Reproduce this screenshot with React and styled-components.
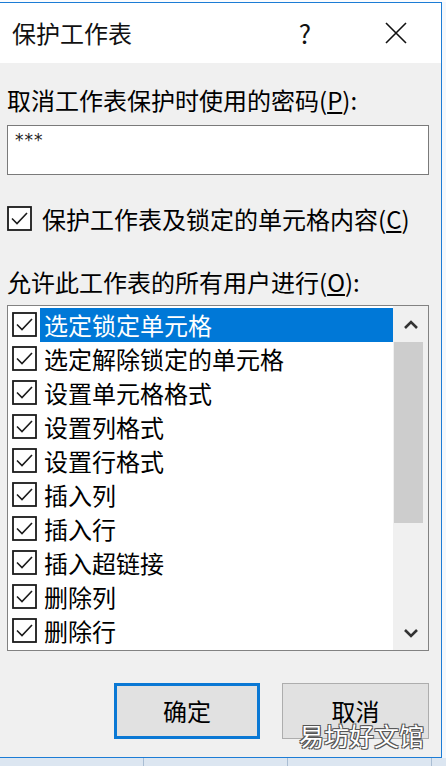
import styled, { createGlobalStyle } from 'styled-components';

const GlobalStyle = createGlobalStyle`
    html, body {
        margin: 0;
        padding: 0;
        background: #f4f7fb;
    }
    body {
        font-family: "Noto Sans CJK SC", "Microsoft YaHei", "Noto Sans", sans-serif;
        color: #000;
        overflow: hidden;
    }
`;

const PERMISSIONS = [
    '选定锁定单元格',
    '选定解除锁定的单元格',
    '设置单元格格式',
    '设置列格式',
    '设置行格式',
    '插入列',
    '插入行',
    '插入超链接',
    '删除列',
    '删除行',
];

const Page = styled.div`
    display: flex;
    flex-direction: column;
    width: 446px;
    height: 766px;
`;

const SheetStrip = styled.div`
    display: flex;
    height: ${({ $height }) => $height}px;
    background: ${({ $bg }) => $bg};
`;

const SheetCell = styled.div`
    width: 144px;
    border-right: 1px solid #a9bdd3;
    box-sizing: border-box;
`;

const Dialog = styled.div`
    position: relative;
    width: 442px;
    box-sizing: border-box;
    border: 1px solid #1c7cd5;
    border-left: none;
    background: #f0f0f0;
    display: flex;
    flex-direction: column;
`;

const TitleBar = styled.div`
    display: flex;
    align-items: center;
    height: 60px;
    padding: 0 20px 0 12px;
    background: #fff;
`;

const Title = styled.div`
    flex: 1;
    font-size: 24px;
    line-height: 30px;
    color: #111;
`;

const HelpButton = styled.div`
    width: 40px;
    margin-right: 46px;
    text-align: center;
    font-size: 26px;
    line-height: 30px;
    color: #111;
`;

const CloseButton = styled.div`
    display: flex;
    justify-content: center;
    align-items: center;
    width: 50px;
    height: 40px;
`;

const Body = styled.div`
    display: flex;
    flex-direction: column;
    padding: 22px 12px 18px 7px;
`;

const Label = styled.div`
    font-size: 24px;
    line-height: 30px;
    margin-top: ${({ $top }) => $top || 0}px;
`;

const PasswordBox = styled.div`
    margin-top: 10px;
    height: 50px;
    box-sizing: border-box;
    border: 1px solid #7a7a7a;
    background: #fff;
    padding: 4px 0 0 7px;
    font-family: "DejaVu Sans", sans-serif;
    font-size: 17px;
    line-height: 20px;
    letter-spacing: 1px;
    color: #222;
`;

const CheckRow = styled.label`
    display: flex;
    align-items: center;
    gap: 10px;
    margin-top: 29px;
    height: 30px;
`;

const CheckText = styled.span`
    font-size: 24px;
    line-height: 30px;
    white-space: nowrap;
`;

const ListBox = styled.div`
    display: flex;
    margin-top: 8px;
    height: 346px;
    box-sizing: border-box;
    border: 1px solid #828282;
    background: #fff;
`;

const Items = styled.div`
    flex: 1;
    padding: 2px 0 0 4px;
`;

const Item = styled.div`
    display: flex;
    align-items: center;
    height: 34px;
    gap: 3px;
`;

const ItemText = styled.div`
    flex: 1;
    height: 34px;
    padding-left: 4px;
    font-size: 24px;
    line-height: 34px;
    color: ${({ $selected }) => ($selected ? '#fff' : '#000')};
    background: ${({ $selected }) => ($selected ? '#0078d7' : 'transparent')};
`;

const ScrollBar = styled.div`
    display: flex;
    flex-direction: column;
    width: 35px;
    padding-top: 2px;
    background: #f0f0f0;
`;

const ScrollArrow = styled.div`
    display: flex;
    justify-content: center;
    align-items: center;
    height: 34px;
`;

const Thumb = styled.div`
    height: 181px;
    width: 29px;
    margin-left: 1px;
    background: #cdcdcd;
`;

const Track = styled.div`
    flex: 1;
`;

const Buttons = styled.div`
    display: flex;
    justify-content: flex-end;
    gap: 22px;
    margin-top: 32px;
`;

const Button = styled.div`
    display: flex;
    justify-content: center;
    align-items: center;
    width: ${({ $width }) => $width}px;
    height: 56px;
    box-sizing: border-box;
    background: #e1e1e1;
    border: ${({ $primary }) => ($primary ? '3px solid #0a78d4' : '1px solid #adadad')};
    font-size: 24px;
    color: #000;
`;

const Watermark = styled.div`
    position: absolute;
    left: 299px;
    top: 717px;
    font-size: 25px;
    line-height: 30px;
    color: #fff;
    text-shadow:
        -1px -1px 0 #555,
        1px -1px 0 #555,
        -1px 1px 0 #555,
        1px 1px 0 #555;
`;

const CheckBox = () => (
    <svg width="25" height="25" viewBox="0 0 25 25">
        <rect x="1" y="1" width="23" height="23" fill="#fff" stroke="#1a1a1a" strokeWidth="1.8" />
        <path d="M5 12.5 L10 17.5 L20 7" fill="none" stroke="#1a1a1a" strokeWidth="1.6" />
    </svg>
);

const Chevron = ({ down }) => (
    <svg width="16" height="10" viewBox="0 0 16 10">
        <path
            d={down ? 'M2 2 L8 8 L14 2' : 'M2 8 L8 2 L14 8'}
            fill="none"
            stroke="#333"
            strokeWidth="2.6"
        />
    </svg>
);

const ProtectSheetDialog = () => (
    <Dialog>
        <TitleBar>
            <Title>保护工作表</Title>
            <HelpButton>?</HelpButton>
            <CloseButton>
                <svg width="22" height="22" viewBox="0 0 22 22">
                    <path d="M1 1 L21 21 M21 1 L1 21" stroke="#111" strokeWidth="1.6" />
                </svg>
            </CloseButton>
        </TitleBar>
        <Body>
            <Label>取消工作表保护时使用的密码(<u>P</u>):</Label>
            <PasswordBox>***</PasswordBox>
            <CheckRow>
                <CheckBox />
                <CheckText>保护工作表及锁定的单元格内容(<u>C</u>)</CheckText>
            </CheckRow>
            <Label $top={33}>允许此工作表的所有用户进行(<u>O</u>):</Label>
            <ListBox>
                <Items>
                    {PERMISSIONS.map((name, i) => (
                        <Item key={name}>
                            <CheckBox />
                            <ItemText $selected={i === 0}>{name}</ItemText>
                        </Item>
                    ))}
                </Items>
                <ScrollBar>
                    <ScrollArrow>
                        <Chevron />
                    </ScrollArrow>
                    <Thumb />
                    <Track />
                    <ScrollArrow>
                        <Chevron down />
                    </ScrollArrow>
                </ScrollBar>
            </ListBox>
            <Buttons>
                <Button $primary $width={146}>确定</Button>
                <Button $width={147}>取消</Button>
            </Buttons>
        </Body>
        <Watermark>易坊好文馆</Watermark>
    </Dialog>
);

export default function App() {
    return (
        <>
            <GlobalStyle />
            <Page>
                <SheetStrip $height={2} $bg="#fbfcfe" />
                <ProtectSheetDialog />
                <SheetStrip $height={10} $bg="#dce6f1">
                    <SheetCell />
                    <SheetCell />
                    <SheetCell />
                </SheetStrip>
            </Page>
        </>
    );
}
